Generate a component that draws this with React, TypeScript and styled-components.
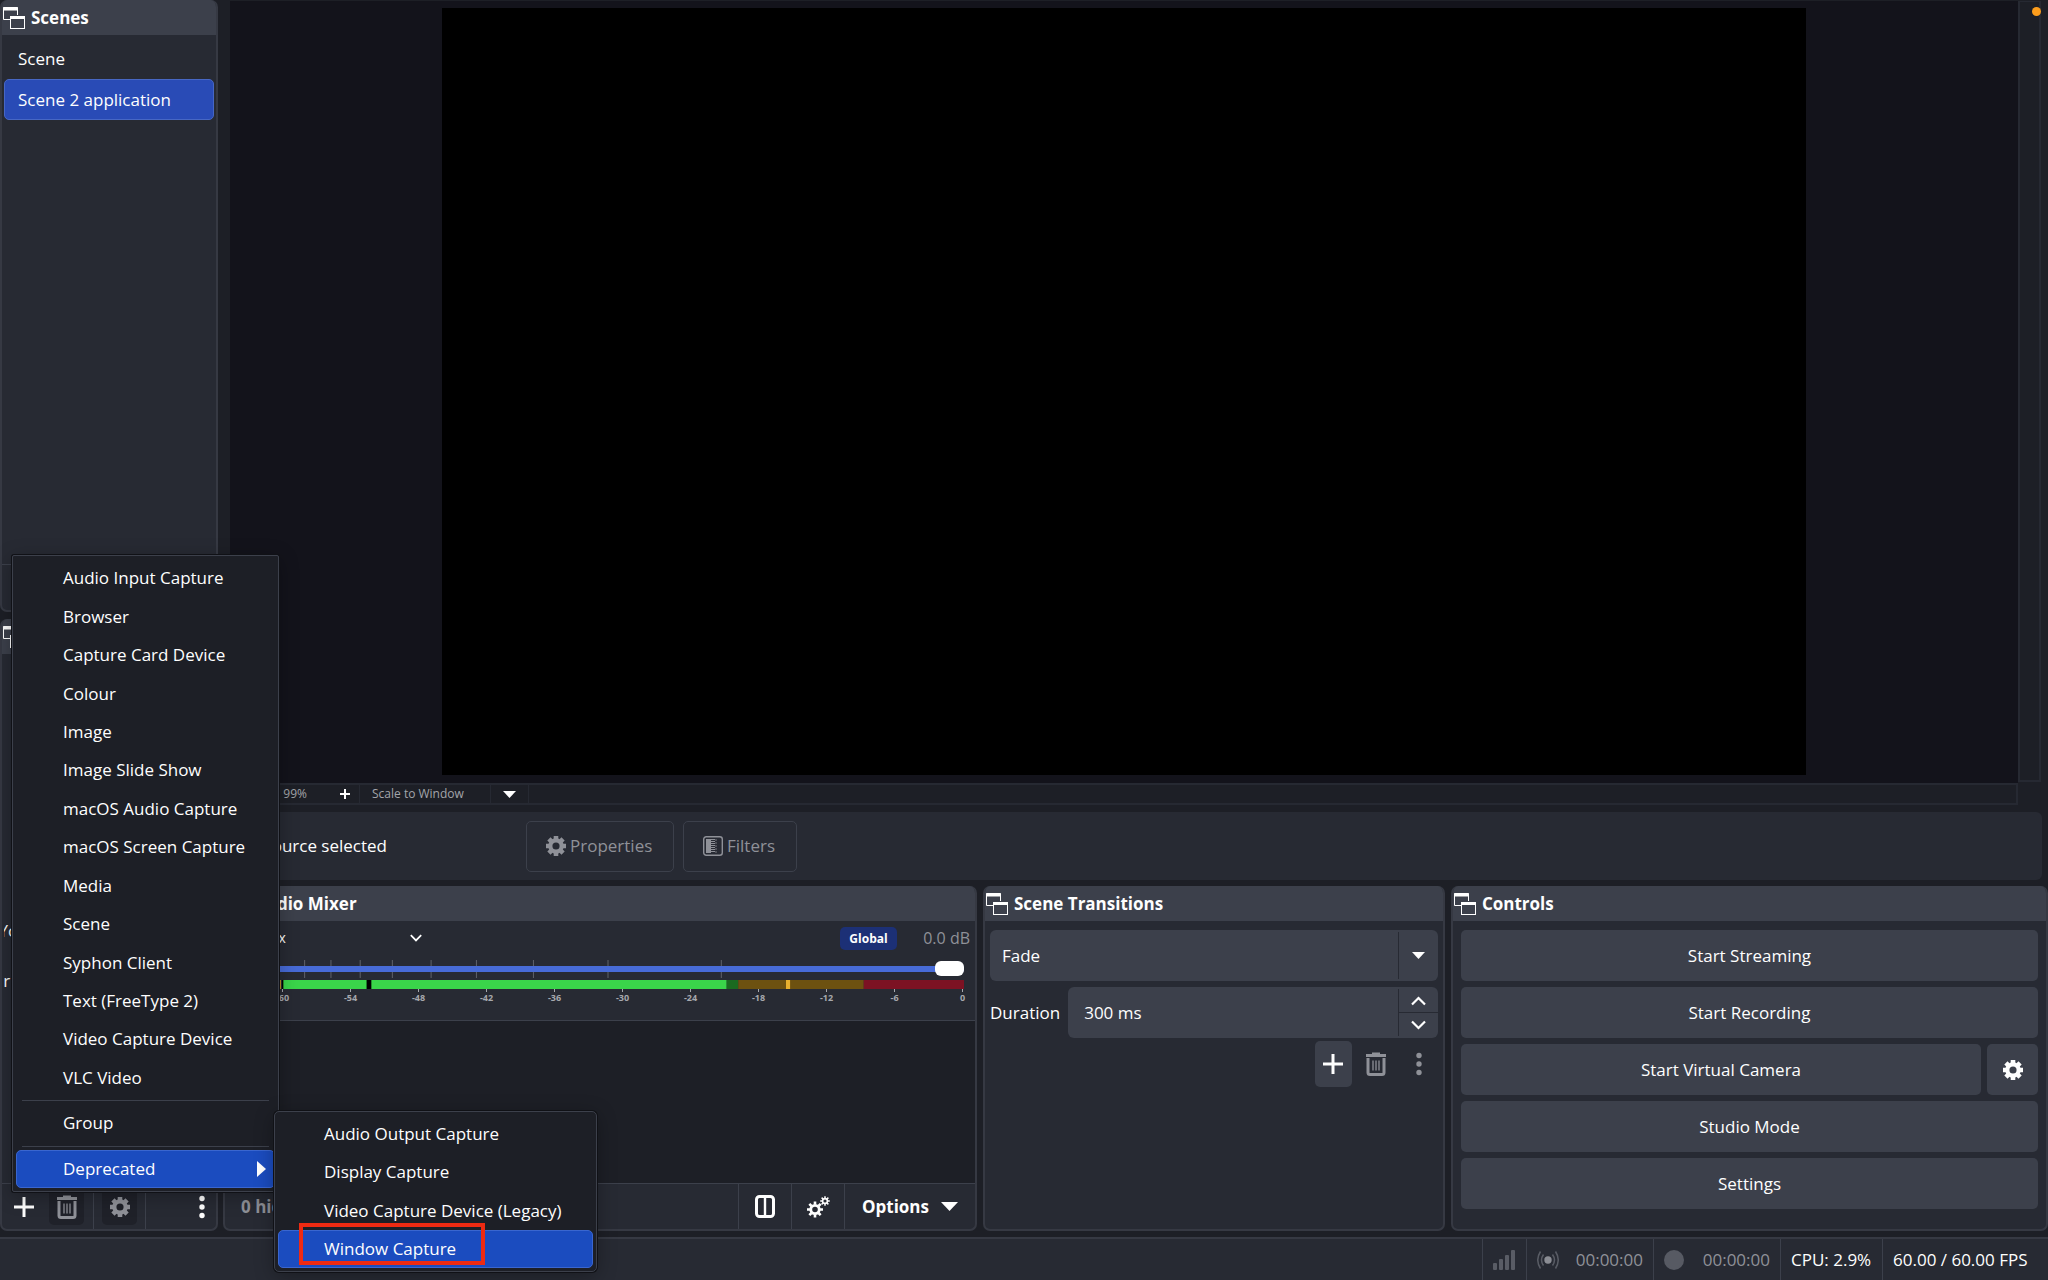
import React from "react";
import styled, { createGlobalStyle } from "styled-components";

const c = {
  base: "#1d1f26",
  panel: "#272a33",
  raised: "#3c404b",
  line: "#363943",
  soft: "#262932",
  text: "#fefefe",
  dim: "#8f9198",
  blue: "#1b4cbf",
};

const GlobalStyle = createGlobalStyle`
  *, *::before, *::after { box-sizing: border-box; }
  body {
    margin: 0;
    background: ${c.base};
    color: ${c.text};
    font-family: "Open Sans", "Noto Sans", sans-serif;
    font-size: 17px;
    line-height: 24px;
  }
  button, input, select { font: inherit; color: inherit; }
  svg { display: block; flex: none; }
`;

const Page = styled.div`
  position: relative;
  display: flex;
  flex-direction: column;
  min-height: 100vh;
  overflow: hidden;
`;

const Workspace = styled.div`
  flex: 1;
  display: flex;
  gap: 5px;
  padding-bottom: 6px;
`;

const LeftColumn = styled.div`
  width: 218px;
  display: flex;
  flex-direction: column;
  gap: 7px;
`;

const RightColumn = styled.div`
  flex: 1;
  min-width: 0;
  display: flex;
  flex-direction: column;
`;

const DockBox = styled.section<{ $grow?: number }>`
  flex: ${(p) => p.$grow ?? 1} 1 0;
  min-width: 0;
  min-height: 0;
  display: flex;
  flex-direction: column;
  background: ${c.panel};
  border: 2px solid ${c.line};
  border-top: 0;
  border-radius: 7px;
  overflow: hidden;
`;

const DockHeader = styled.header`
  flex: none;
  height: 35px;
  margin: 0 -2px;
  padding-left: 3px;
  display: flex;
  align-items: center;
  gap: 6px;
  background: ${c.raised};
`;

const DockTitle = styled.h2`
  margin: 0;
  font-size: 17px;
  line-height: 24px;
  font-weight: 700;
`;

const DockFooter = styled.footer`
  flex: none;
  height: 46px;
  display: flex;
  align-items: center;
  border-top: 1px solid ${c.raised};
`;

const IconButton = styled.button<{ $shade?: string; $width?: number; $height?: number }>`
  width: ${(p) => p.$width ?? 35}px;
  height: ${(p) => p.$height ?? 36}px;
  padding: 0;
  border: 0;
  border-radius: 5px;
  display: flex;
  align-items: center;
  justify-content: center;
  background: ${(p) => p.$shade ?? "transparent"};
  color: ${c.text};
  &:disabled { color: ${c.dim}; }
`;

const Divider = styled.span`
  width: 1px;
  align-self: stretch;
  background: ${c.raised};
`;

const SceneList = styled.ul`
  flex: 1;
  margin: 0;
  padding: 3px 2px;
  list-style: none;
`;

const SceneItem = styled.li<{ $selected?: boolean }>`
  height: 41px;
  padding: 0 13px;
  display: flex;
  align-items: center;
  border: 1px solid ${(p) => (p.$selected ? "#4767c4" : "transparent")};
  border-radius: 5px;
  background: ${(p) => (p.$selected ? "#294bb6" : "transparent")};
`;

const EmptySources = styled.div`
  flex: 1;
  margin: 0 2px;
  display: flex;
  flex-direction: column;
  align-items: center;
  justify-content: center;
  padding-bottom: 0;
  overflow: hidden;
  white-space: nowrap;
  line-height: 25px;
  padding-top: 74px;
`;

const PreviewRow = styled.div`
  flex: 1 1 0;
  min-height: 0;
  display: flex;
  margin-right: 7px;
  padding: 1px 0 0 7px;
`;

const Preview = styled.main`
  flex: 1;
  min-width: 0;
  display: flex;
  justify-content: center;
  padding: 7px 0 8px;
  background: #13131b;
`;

const Canvas = styled.div`
  height: 100%;
  aspect-ratio: 16 / 9;
  background: #000;
`;

const SideRail = styled.div`
  width: 23px;
  margin-bottom: 1px;
  border: 2px solid ${c.soft};
  border-top-width: 1px;
`;

const ZoomBar = styled.div`
  flex: none;
  height: 22px;
  margin: 0 30px 0 7px;
  display: flex;
  align-items: center;
  border: 2px solid ${c.soft};
  color: #a3a5aa;
  font-size: 12px;
  line-height: 16px;
`;

const ZoomPart = styled.div<{ $width: number }>`
  width: ${(p) => p.$width}px;
  align-self: stretch;
  display: flex;
  align-items: center;
  justify-content: flex-end;
  border-right: 1px solid ${c.soft};
`;

const ZoomValue = styled.output`
  flex: 1;
  text-align: right;
  padding-right: 24px;
`;

const PlainSelect = styled.select`
  flex: 1;
  min-width: 0;
  height: 100%;
  padding: 0 0 0 12px;
  border: 0;
  appearance: none;
  background: transparent;
  outline: none;
`;

const SourceBar = styled.div`
  flex: none;
  height: 68px;
  margin: 7px 6px 6px 7px;
  padding-right: 8px;
  display: flex;
  align-items: center;
  gap: 9px;
  background: ${c.panel};
  border-radius: 6px;
`;

const SourceState = styled.span`
  width: 287px;
  padding-right: 130px;
  text-align: right;
  white-space: nowrap;
`;

const OutlineButton = styled.button<{ $width: number }>`
  width: ${(p) => p.$width}px;
  height: 51px;
  padding: 0 0 0 19px;
  display: flex;
  align-items: center;
  gap: 4px;
  border: 1px solid ${c.raised};
  border-radius: 5px;
  background: transparent;
  &:disabled { color: ${c.dim}; }
`;

const DockRow = styled.div`
  flex: none;
  display: flex;
  gap: 6px;
`;

const Channel = styled.div`
  height: 100px;
  padding: 5px 11px 0 8px;
  border-bottom: 1px solid ${c.raised};
`;

const ChannelTop = styled.div`
  height: 24px;
  display: flex;
  align-items: center;
  margin-right: -6px;
`;

const ChannelName = styled.button`
  width: 189px;
  padding: 0;
  border: 0;
  display: flex;
  align-items: center;
  justify-content: space-between;
  background: transparent;
  font-size: 14px;
  line-height: 20px;
`;

const Badge = styled.span`
  margin-left: auto;
  width: 57px;
  height: 23px;
  border-radius: 5px;
  background: #1c3076;
  font-size: 12px;
  line-height: 23px;
  font-weight: 700;
  text-align: center;
`;

const Decibels = styled.output`
  width: 73px;
  color: ${c.dim};
  font-size: 16px;
  line-height: 20px;
  text-align: right;
`;

const FaderBox = styled.div`
  position: relative;
  height: 18px;
  margin-top: 10px;
`;

const FaderTicks = styled.svg`
  position: absolute;
  inset: 0;
  width: 100%;
  height: 100%;
`;

const Fader = styled.input`
  position: absolute;
  inset: 0;
  width: 100%;
  height: 18px;
  margin: 0;
  appearance: none;
  background: transparent;
  &::-webkit-slider-runnable-track {
    height: 6px;
    border-radius: 2px;
    background: #476bd7;
  }
  &::-webkit-slider-thumb {
    appearance: none;
    width: 29px;
    height: 15px;
    margin-top: -5px;
    border-radius: 6px;
    background: #fff;
  }
`;

const MeterRow = styled.div`
  display: flex;
  gap: 1px;
  margin-top: 2px;
  padding-left: 44px;
`;

const ClipLamp = styled.span`
  width: 4px;
  height: 9px;
  background: #b98a2a;
`;

const MeterScale = styled.div`
  display: flex;
  justify-content: space-between;
  padding: 0 1px 0 49px;
`;

const Mark = styled.span`
  width: 1px;
  display: flex;
  flex-direction: column;
  align-items: center;
  color: #a6a8ad;
  font-size: 9px;
  line-height: 11px;
  font-weight: 700;
  &::before {
    content: "";
    width: 1px;
    height: 3px;
    background: #a6a8ad;
  }
`;

const MixerEmpty = styled.div`
  flex: 1;
  background: ${c.base};
`;

const Hidden = styled.span`
  flex: 1;
  padding-left: 16px;
  color: ${c.dim};
  font-weight: 700;
`;

const FooterCell = styled.button<{ $width: number }>`
  width: ${(p) => p.$width}px;
  height: 100%;
  padding: 0;
  display: flex;
  align-items: center;
  justify-content: center;
  gap: 12px;
  border: 0;
  border-left: 1px solid ${c.raised};
  background: transparent;
  font-weight: 700;
`;

const DockBody = styled.div`
  flex: 1;
  display: flex;
  flex-direction: column;
  gap: 6px;
  padding: 9px 8px 20px;
`;

const TransitionBody = styled(DockBody)`
  padding: 9px 5px 0;
`;

const Field = styled.div`
  flex: 1;
  min-width: 0;
  height: 51px;
  display: flex;
  border-radius: 6px;
  background: ${c.raised};
`;

const FieldRow = styled.div`
  flex: none;
  display: flex;
  align-items: center;
  gap: 8px;
`;

const FieldEnd = styled.span`
  width: 40px;
  margin: 2px 0;
  display: flex;
  flex-direction: column;
  align-items: center;
  justify-content: center;
  border-left: 1px solid ${c.panel};
`;

const SpinInput = styled.input`
  flex: 1;
  min-width: 0;
  padding: 0 0 0 16px;
  border: 0;
  outline: none;
  background: transparent;
`;

const SpinButton = styled.button`
  width: 100%;
  flex: 1;
  padding: 0;
  border: 0;
  display: flex;
  align-items: center;
  justify-content: center;
  background: transparent;
  & + & { border-top: 1px solid ${c.panel}; }
`;

const TransitionTools = styled.div`
  display: flex;
  justify-content: flex-end;
  align-items: center;
  gap: 6px;
  margin-top: -3px;
`;

const ControlButton = styled.button`
  flex: 1;
  height: 51px;
  padding: 0;
  border: 0;
  border-radius: 5px;
  background: ${c.raised};
`;

const ControlRow = styled.div`
  flex: none;
  display: flex;
  gap: 6px;
`;

const StatusBar = styled.footer`
  flex: none;
  height: 43px;
  display: flex;
  justify-content: flex-end;
  border-top: 2px solid ${c.line};
  background: ${c.panel};
`;

const StatusCell = styled.div<{ $width: number; $dim?: boolean }>`
  width: ${(p) => p.$width}px;
  padding: 0 10px;
  display: flex;
  align-items: center;
  justify-content: space-between;
  border-left: 1px solid ${c.raised};
  color: ${(p) => (p.$dim ? c.dim : c.text)};
  white-space: nowrap;
`;

const Menu = styled.ul<{ $left: number; $bottom: number; $width: number; $height: number; $radius: number }>`
  position: absolute;
  left: ${(p) => p.$left}px;
  bottom: ${(p) => p.$bottom}px;
  width: ${(p) => p.$width}px;
  height: ${(p) => p.$height}px;
  margin: 0;
  padding: 3px;
  list-style: none;
  display: flex;
  flex-direction: column;
  border: 1px solid ${c.raised};
  border-radius: ${(p) => p.$radius}px;
  background: ${c.base};
  box-shadow: 0 0 0 1px #101116, 0 4px 20px rgba(0, 0, 0, 0.3);
`;

const MenuRow = styled.li`
  flex: 1;
  display: flex;
`;

const MenuItem = styled.button<{ $active?: boolean; $indent: number }>`
  flex: 1;
  padding: 0 8px 0 ${(p) => p.$indent}px;
  display: flex;
  align-items: center;
  justify-content: space-between;
  border: 1px solid ${(p) => (p.$active ? "#3a66cf" : "transparent")};
  border-radius: 5px;
  background: ${(p) => (p.$active ? c.blue : "transparent")};
  text-align: left;
  white-space: nowrap;
`;

const MenuLine = styled.li`
  height: 1px;
  margin: 3px 6px;
  background: ${c.raised};
`;

const Highlight = styled.span`
  position: absolute;
  left: 24px;
  bottom: 6px;
  width: 186px;
  height: 42px;
  border: 4px solid #ee2a12;
`;

const AlertDot = styled.span`
  position: absolute;
  top: 7px;
  right: 7px;
  width: 9px;
  height: 9px;
  border-radius: 50%;
  background: #fc9d1c;
`;

const DockIcon = () => (
  <svg width="22" height="22" viewBox="0 0 22 22" fill="none" stroke="#fff" strokeWidth="1">
    <path d="M7 12.5H.5V.5h14V8" />
    <path d="M0 2h15" strokeWidth="3" />
    <rect x="7.500" y="9.500" width="14" height="12" />
    <path d="M7 10.500h15" strokeWidth="3" />
  </svg>
);

const Plus = ({ size = 20, weight = 3 }: { size?: number; weight?: number }) => (
  <svg width={size} height={size} viewBox={`0 0 ${size} ${size}`} stroke="currentColor" strokeWidth={weight}>
    <path d={`M${size / 2} 0V${size}M0 ${size / 2}H${size}`} />
  </svg>
);

const Trash = () => (
  <svg width="22" height="24" viewBox="0 0 22 24" fill="none" stroke="currentColor">
    <path d="M1 3.500h20" strokeWidth="3" />
    <path d="M7 1.500h8" strokeWidth="2" />
    <path d="M3 6v14.500q0 2 2 2h12q2 0 2-2V6" strokeWidth="3" />
    <path d="M8 8.500v10M11 8.500v10M14 8.500v10" strokeWidth="1.300" />
  </svg>
);

const Dots = () => (
  <svg width="6" height="24" viewBox="0 0 6 24" fill="currentColor">
    <circle cx="3" cy="3.500" r="2.700" />
    <circle cx="3" cy="12" r="2.700" />
    <circle cx="3" cy="20.500" r="2.700" />
  </svg>
);

const Cog = ({ size = 20 }: { size?: number }) => (
  <svg width={size} height={size} viewBox="0 0 24 24" fill="none" stroke="currentColor">
    <circle cx="12" cy="12" r="6.800" strokeWidth="5" />
    {[0, 45, 90, 135].map((a) => (
      <path key={a} d="M12 0v4M12 20v4" strokeWidth="5.500" transform={`rotate(${a} 12 12)`} />
    ))}
  </svg>
);

const Gears = () => (
  <svg width="23" height="22" viewBox="0 0 23 22" fill="none" stroke="currentColor">
    <circle cx="8" cy="13.500" r="4.200" strokeWidth="2.800" />
    {[0, 45, 90, 135].map((a) => (
      <path key={a} d="M8 5.500v3M8 18.500v3" strokeWidth="2.600" transform={`rotate(${a} 8 13.500)`} />
    ))}
    <circle cx="18" cy="5" r="2.400" strokeWidth="1.600" />
    {[0, 45, 90, 135].map((a) => (
      <path key={a} d="M18 .2v2M18 7.800v2" strokeWidth="1.500" transform={`rotate(${a} 18 5)`} />
    ))}
  </svg>
);

const FilterIcon = () => (
  <svg width="20" height="20" viewBox="0 0 20 20" fill="none" stroke="currentColor">
    <rect x=".7" y=".7" width="18.600" height="18.600" rx="2.500" strokeWidth="1.400" />
    <path d="M3 3h5v14H3z" fill="currentColor" stroke="none" />
    <path d="M9 3v14M11 3v14" strokeWidth="2" strokeDasharray="1 1" />
    <path d="M13 3.500v14" strokeWidth="1.500" strokeDasharray="1 2" />
  </svg>
);

const Triangle = ({ width = 13, height = 7 }: { width?: number; height?: number }) => (
  <svg width={width} height={height} viewBox="0 0 14 8" preserveAspectRatio="none" fill="#fff">
    <path d="M0 0h14L7 8z" />
  </svg>
);

const Chevron = ({ up, width = 15 }: { up?: boolean; width?: number }) => (
  <svg width={width} height={(width * 2) / 3} viewBox="0 0 15 10" fill="none" stroke="#fff" strokeWidth="2.200">
    <path d={up ? "M1 8.500 7.500 2 14 8.500" : "M1 1.500 7.500 8 14 1.500"} />
  </svg>
);

const Columns = () => (
  <svg width="20" height="23" viewBox="0 0 20 23" fill="none" stroke="currentColor">
    <rect x="1.500" y="1.500" width="17" height="20" rx="3" strokeWidth="3" />
    <path d="M10 2v19" strokeWidth="2.400" />
  </svg>
);

const Signal = () => (
  <svg width="23" height="20" viewBox="0 0 23 20" fill="#595c65">
    <rect x="0" y="13" width="4" height="7" rx="1" />
    <rect x="6" y="9" width="4" height="11" rx="1" />
    <rect x="12" y="5" width="4" height="15" rx="1" />
    <rect x="18" y="0" width="4" height="20" rx="1" />
  </svg>
);

const Broadcast = () => (
  <svg width="22" height="20" viewBox="0 0 22 20" fill="none" stroke="#595c65" strokeWidth="1.500">
    <circle cx="11" cy="10" r="3.700" fill="#8b8d94" stroke="none" />
    <path d="M6.500 4.500q-4 5.500 0 11M15.500 4.500q4 5.500 0 11M3.500 1.500q-5.500 8.500 0 17M18.500 1.500q5.500 8.500 0 17" />
  </svg>
);

const RecordDot = () => (
  <svg width="20" height="20" viewBox="0 0 20 20" fill="#575a63">
    <circle cx="10" cy="10" r="10" />
  </svg>
);

const faderTicks = [9.8, 13.4, 17.4, 21.8, 27.1, 33.3, 41.1, 51.3, 66.8];
const marks = ["-60", "-54", "-48", "-42", "-36", "-30", "-24", "-18", "-12", "-6", "0"];
const meterParts = [
  { from: 0, to: 65.2, fill: "#3ad54a" },
  { from: 65.2, to: 66.9, fill: "#1b6a20" },
  { from: 66.9, to: 85.3, fill: "#6d5110" },
  { from: 85.3, to: 100, fill: "#7c1223" },
  { from: 12.4, to: 13.1, fill: "#000" },
  { from: 73.9, to: 74.5, fill: "#e8b02e" },
  { from: 0, to: 0.2, fill: "#000" },
];

const sources = [
  "Audio Input Capture",
  "Browser",
  "Capture Card Device",
  "Colour",
  "Image",
  "Image Slide Show",
  "macOS Audio Capture",
  "macOS Screen Capture",
  "Media",
  "Scene",
  "Syphon Client",
  "Text (FreeType 2)",
  "Video Capture Device",
  "VLC Video",
];
const deprecated = ["Audio Output Capture", "Display Capture", "Video Capture Device (Legacy)", "Window Capture"];

type DockProps = { title: string; grow?: number; children: React.ReactNode };

const Dock = ({ title, grow, children }: DockProps) => (
  <DockBox $grow={grow} aria-label={title}>
    <DockHeader>
      <DockIcon />
      <DockTitle>{title}</DockTitle>
    </DockHeader>
    {children}
  </DockBox>
);

const SourcesFooterBar = styled(DockFooter)`
  padding-left: 4px;
  svg { margin: auto; }
`;

const FooterSpace = styled.span<{ $width?: number }>`
  flex: ${(p) => (p.$width ? "none" : 1)};
  width: ${(p) => p.$width ?? 0}px;
`;

const SourcesFooter = () => (
  <SourcesFooterBar>
    <IconButton aria-label="Add source"><Plus /></IconButton>
    <FooterSpace $width={8} />
    <IconButton aria-label="Remove source" $shade="#1f2129" disabled><Trash /></IconButton>
    <FooterSpace $width={9} />
    <Divider />
    <FooterSpace $width={8} />
    <IconButton aria-label="Source properties" $shade="#1f2129" disabled><Cog /></IconButton>
    <FooterSpace $width={8} />
    <Divider />
    <FooterSpace />
    <IconButton aria-label="More source actions" $width={28}><Dots /></IconButton>
  </SourcesFooterBar>
);

const AudioMixer = () => (
  <Dock title="Audio Mixer" grow={755}>
    <Channel>
      <ChannelTop>
        <ChannelName>Mic/Aux<Chevron width={12} /></ChannelName>
        <Badge>Global</Badge>
        <Decibels>0.0 dB</Decibels>
      </ChannelTop>
      <FaderBox>
        <FaderTicks stroke="#5f626b" strokeWidth="1">
          {faderTicks.map((x) => <line key={x} x1={`${x}%`} x2={`${x}%`} y1="0" y2="18" />)}
        </FaderTicks>
        <Fader type="range" min={0} max={100} defaultValue={100} aria-label="Mic/Aux volume" />
      </FaderBox>
      <MeterRow>
        <ClipLamp />
        <svg width="100%" height="9" style={{ flex: 1 }}>
          {meterParts.map((m) => (
            <rect key={`${m.from}-${m.to}`} x={`${m.from}%`} width={`${m.to - m.from}%`} height="9" fill={m.fill} />
          ))}
        </svg>
      </MeterRow>
      <MeterScale>{marks.map((m) => <Mark key={m}>{m}</Mark>)}</MeterScale>
    </Channel>
    <MixerEmpty />
    <DockFooter>
      <Hidden>0 hidden</Hidden>
      <FooterCell $width={53} aria-label="Mixer layout"><Columns /></FooterCell>
      <FooterCell $width={53} aria-label="Advanced audio"><Gears /></FooterCell>
      <FooterCell $width={131}>Options<Triangle width={17} height={9} /></FooterCell>
    </DockFooter>
  </Dock>
);

const Transitions = () => (
  <Dock title="Scene Transitions" grow={461}>
    <TransitionBody>
      <FieldRow>
        <Field>
          <PlainSelect aria-label="Transition" defaultValue="Fade"><option>Fade</option></PlainSelect>
          <FieldEnd><Triangle /></FieldEnd>
        </Field>
      </FieldRow>
      <FieldRow>
        <label htmlFor="duration">Duration</label>
        <Field>
          <SpinInput id="duration" defaultValue="300 ms" />
          <FieldEnd>
            <SpinButton aria-label="Increase duration"><Chevron up /></SpinButton>
            <SpinButton aria-label="Decrease duration"><Chevron /></SpinButton>
          </FieldEnd>
        </Field>
      </FieldRow>
      <TransitionTools>
        <IconButton aria-label="Add transition" $shade={c.raised} $width={37} $height={46}><Plus /></IconButton>
        <IconButton aria-label="Remove transition" $width={37} disabled><Trash /></IconButton>
        <IconButton aria-label="Transition options" $width={37} disabled><Dots /></IconButton>
      </TransitionTools>
    </TransitionBody>
  </Dock>
);

const GearControl = styled(ControlButton)`
  flex: none;
  width: 51px;
  display: flex;
  align-items: center;
  justify-content: center;
`;

const Controls = () => (
  <Dock title="Controls" grow={597}>
    <DockBody>
      <ControlRow><ControlButton>Start Streaming</ControlButton></ControlRow>
      <ControlRow><ControlButton>Start Recording</ControlButton></ControlRow>
      <ControlRow>
        <ControlButton>Start Virtual Camera</ControlButton>
        <GearControl aria-label="Virtual camera settings"><Cog /></GearControl>
      </ControlRow>
      <ControlRow><ControlButton>Studio Mode</ControlButton></ControlRow>
      <ControlRow><ControlButton>Settings</ControlButton></ControlRow>
    </DockBody>
  </Dock>
);

export default function App() {
  return (
    <Page>
      <GlobalStyle />
      <Workspace>
        <LeftColumn>
          <Dock title="Scenes">
            <SceneList>
              <SceneItem>Scene</SceneItem>
              <SceneItem $selected>Scene 2 application</SceneItem>
            </SceneList>
            <DockFooter />
          </Dock>
          <Dock title="Sources">
            <EmptySources>
              <span>You don't have any sources.</span>
              <span>Click the + button below,</span>
              <span>or right click here to add one.</span>
            </EmptySources>
            <SourcesFooter />
          </Dock>
        </LeftColumn>
        <RightColumn>
          <PreviewRow>
            <Preview><Canvas /></Preview>
            <SideRail />
          </PreviewRow>
          <ZoomBar>
            <ZoomPart $width={128}>
              <ZoomValue>99%</ZoomValue>
              <IconButton aria-label="Zoom in" $width={28} $height={18}><Plus size={10} weight={2} /></IconButton>
            </ZoomPart>
            <ZoomPart $width={131}>
              <PlainSelect aria-label="Preview scaling" defaultValue="Scale to Window">
                <option>Scale to Window</option>
              </PlainSelect>
            </ZoomPart>
            <ZoomPart $width={38}>
              <IconButton aria-label="Scaling options" $width={38} $height={18}><Triangle /></IconButton>
            </ZoomPart>
          </ZoomBar>
          <SourceBar>
            <SourceState>No source selected</SourceState>
            <OutlineButton $width={148} disabled><Cog />Properties</OutlineButton>
            <OutlineButton $width={114} disabled><FilterIcon />Filters</OutlineButton>
          </SourceBar>
          <DockRow>
            <AudioMixer />
            <Transitions />
            <Controls />
          </DockRow>
        </RightColumn>
      </Workspace>
      <StatusBar>
        <StatusCell $width={44}><Signal /></StatusCell>
        <StatusCell $width={127} $dim><Broadcast />00:00:00</StatusCell>
        <StatusCell $width={127} $dim><RecordDot />00:00:00</StatusCell>
        <StatusCell $width={102}>CPU: 2.9%</StatusCell>
        <StatusCell $width={166}>60.00 / 60.00 FPS</StatusCell>
      </StatusBar>
      <Menu aria-label="Add source" $left={12} $bottom={88} $width={267} $height={637} $radius={2}>
        {sources.map((s) => (
          <MenuRow key={s}><MenuItem $indent={46}>{s}</MenuItem></MenuRow>
        ))}
        <MenuLine />
        <MenuRow><MenuItem $indent={46}>Group</MenuItem></MenuRow>
        <MenuLine />
        <MenuRow>
          <MenuItem $indent={46} $active>
            Deprecated
            <svg width="9" height="16" viewBox="0 0 9 16" fill="#fff"><path d="M0 0l9 8-9 8z" /></svg>
          </MenuItem>
        </MenuRow>
      </Menu>
      <Menu aria-label="Deprecated" $left={274} $bottom={8} $width={323} $height={161} $radius={5}>
        {deprecated.map((s) => (
          <MenuRow key={s}>
            <MenuItem $indent={45} $active={s === "Window Capture"}>{s}</MenuItem>
          </MenuRow>
        ))}
        <Highlight as="li" aria-hidden="true" />
      </Menu>
      <AlertDot />
    </Page>
  );
}
